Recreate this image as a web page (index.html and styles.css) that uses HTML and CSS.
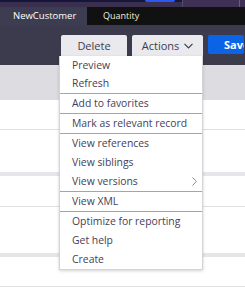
FILE: index.html
```html
<!DOCTYPE html>
<html lang="en">
<head>
    <meta charset="UTF-8">
    <title>Actions menu</title>
    <link rel="stylesheet" href="styles.css">
</head>
<body>
    <div class="page">
        <div class="topbar">
            <div class="topbar-left"><span class="topbar-accent"></span></div>
            <div class="topbar-right"><span class="topbar-divider"></span></div>
        </div>

        <div class="tabs">
            <div class="tab active">NewCustomer</div>
            <div class="tab">Quantity</div>
        </div>

        <div class="toolbar">
            <button class="btn">Delete</button>
            <button class="btn btn-actions">Actions
                <svg width="9" height="6" viewBox="0 0 9 6"><polyline points="0.5,0.8 4.5,4.8 8.5,0.8" fill="none" stroke="#3d3d4d" stroke-width="1.2"/></svg>
            </button>
            <button class="btn btn-save">Save</button>
        </div>

        <div class="grid">
            <div class="grid-head"></div>
            <div class="grid-row h29 line"></div>
            <div class="grid-row h45 band"></div>
            <div class="grid-row h30 line"></div>
            <div class="grid-row h49 band"></div>
            <div class="grid-row h29 line"></div>
            <div class="grid-row h8"></div>
        </div>

        <ul class="menu">
            <li class="first">Preview</li>
            <li class="sep">Refresh</li>
            <li class="sep">Add to favorites</li>
            <li class="sep">Mark as relevant record</li>
            <li>View references</li>
            <li>View siblings</li>
            <li class="sep has-sub">View versions
                <svg width="5" height="9" viewBox="0 0 5 9"><polyline points="0.5,0.5 4.3,4.5 0.5,8.5" fill="none" stroke="#8a8a96" stroke-width="1"/></svg>
            </li>
            <li class="sep">View XML</li>
            <li>Optimize for reporting</li>
            <li>Get help</li>
            <li>Create</li>
        </ul>
    </div>
</body>
</html>
```

FILE: styles.css
```css
* {
    margin: 0;
    padding: 0;
    box-sizing: border-box;
}

body {
    font-family: 'Open Sans', 'Liberation Sans', sans-serif;
    background: #fff;
    width: 245px;
    height: 300px;
    overflow: hidden;
}

.page {
    position: relative;
    width: 245px;
    height: 300px;
    overflow: hidden;
}

/* top strip, cut off by the crop */
.topbar {
    display: flex;
    height: 7px;
}

.topbar-left {
    width: 182px;
    background: linear-gradient(#15163a 0, #15163a 2px, #3b2f50 2px);
    position: relative;
}

.topbar-accent {
    position: absolute;
    left: 145px;
    top: 0;
    width: 30px;
    height: 2px;
    background: #2b59f0;
    border-radius: 0 0 2px 2px;
}

.topbar-right {
    flex: 1;
    background: #3f3155;
    border-left: 1px solid #574a6a;
    position: relative;
}

.topbar-divider {
    position: absolute;
    left: 56px;
    top: 0;
    width: 1px;
    height: 7px;
    background: #6a5d7c;
}

.tabs {
    display: flex;
    height: 18px;
    background: #111112;
}

.tab {
    font-size: 9px;
    color: #f3eedc;
    line-height: 18px;
    padding: 0 0 0 16px;
}

.tab.active {
    width: 87px;
    padding-left: 13px;
    background: #3c3d51;
    color: #fff;
    font-size: 9.5px;
}

.toolbar {
    display: flex;
    gap: 5px;
    height: 40px;
    padding: 10px 0 0 61px;
    background: #3b3b4d;
}

.btn {
    font-family: inherit;
    font-size: 11px;
    color: #3d3d4d;
    background: #e9e9ee;
    border: none;
    border-radius: 2px 2px 0 0;
    height: 21px;
    width: 66px;
    flex-shrink: 0;
}

.btn-actions {
    width: 71px;
    display: flex;
    align-items: center;
    justify-content: center;
    gap: 5px;
}

.btn-save {
    background: #0b63e6;
    color: #fff;
    font-weight: bold;
    border-radius: 2px;
    height: 19px;
    width: 36px;
    text-align: left;
    padding-left: 16px;
    overflow: hidden;
    white-space: nowrap;
}

.grid-head {
    height: 35px;
    background: #dcdce1;
}

.grid-row.h29 { height: 30px; }
.grid-row.h30 { height: 31px; }
.grid-row.h45 { height: 46px; }
.grid-row.h49 { height: 50px; }
.grid-row.h8 { height: 8px; }

.grid-row.line {
    border-bottom: 1px solid #e0e0e3;
}

.grid-row.band {
    border-bottom: 4px solid #e6e6ea;
}

.menu {
    position: absolute;
    left: 59px;
    top: 56px;
    width: 144px;
    list-style: none;
    background: #fff;
    border: 1px solid #d4d4d8;
    border-top: none;
    box-shadow: 0 1px 3px rgba(0, 0, 0, 0.18);
}

.menu li {
    font-size: 10.4px;
    color: #463e58;
    height: 19px;
    line-height: 19px;
    padding-left: 12px;
}

.menu li.first {
    height: 18px;
    line-height: 18px;
}

.menu li.sep {
    height: 20px;
    border-bottom: 1px solid #a4a4aa;
}

.menu li.has-sub {
    display: flex;
    align-items: center;
    justify-content: space-between;
    padding-right: 5px;
}
```
